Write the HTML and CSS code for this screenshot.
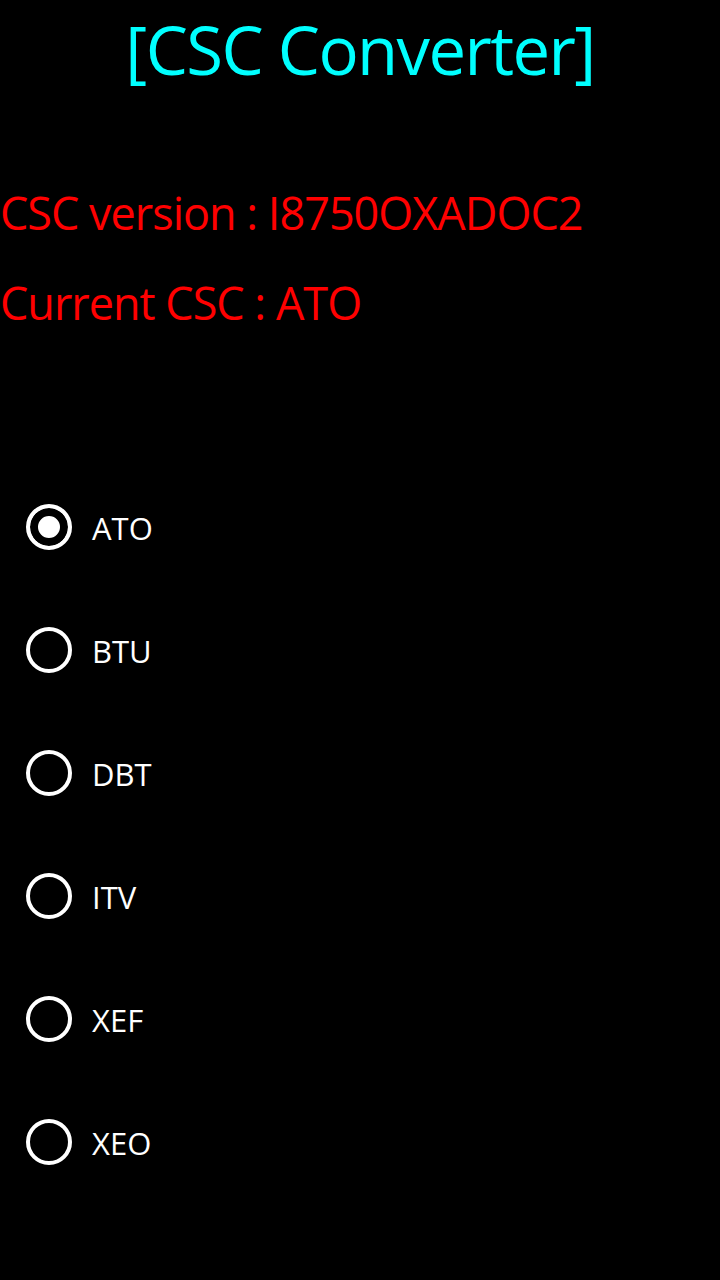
FILE: index.html
```html
<!DOCTYPE html>
<html lang="en">
<head>
  <meta charset="UTF-8" />
  <meta name="viewport" content="width=device-width, initial-scale=1.0" />
  <title>CSC Converter</title>
  <link rel="stylesheet" href="styles.css">
</head>
<body>
  <h1 class="title">[CSC Converter]</h1>

  <div class="info">
    <p>CSC version : I8750OXADOC2</p>
    <p>Current CSC : ATO</p>
  </div>

  <form class="csc-list">
    <label class="option"><input type="radio" name="csc" value="ATO" checked /> <span>ATO</span></label>
    <label class="option"><input type="radio" name="csc" value="BTU" /> <span>BTU</span></label>
    <label class="option"><input type="radio" name="csc" value="DBT" /> <span>DBT</span></label>
    <label class="option"><input type="radio" name="csc" value="ITV" /> <span>ITV</span></label>
    <label class="option"><input type="radio" name="csc" value="XEF" /> <span>XEF</span></label>
    <label class="option"><input type="radio" name="csc" value="XEO" /> <span>XEO</span></label>
  </form>
</body>
</html>
```

FILE: styles.css
```css
body {
  font-family: "Open Sans", "Noto Sans", sans-serif;
  background-color: #000;
  color: #fff;
  margin: 0;
  width: 720px;
  height: 1280px;
  overflow: hidden;
}

.title {
  margin: 0;
  padding-top: 4px;
  text-align: center;
  color: #00ffff;
  font-size: 67px;
  font-weight: normal;
  line-height: 90px;
  letter-spacing: -1.6px;
}

.info {
  margin-top: 74px;
}

.info p {
  margin: 0;
  color: #ff0000;
  font-size: 45px;
  line-height: 90px;
  letter-spacing: -1px;
}

.csc-list {
  display: flex;
  flex-direction: column;
  margin-top: 117px;
}

.option {
  display: flex;
  align-items: center;
  height: 123px;
  padding-left: 26px;
  font-size: 31px;
  cursor: pointer;
}

.option input {
  appearance: none;
  -webkit-appearance: none;
  box-sizing: border-box;
  width: 46px;
  height: 46px;
  margin: 0 20px 0 0;
  border: 4px solid #fff;
  border-radius: 50%;
  background: transparent;
}

.option span {
  padding-top: 3px;
}

.option input:checked {
  background-color: #fff;
  box-shadow: inset 0 0 0 8px #000;
}
```
